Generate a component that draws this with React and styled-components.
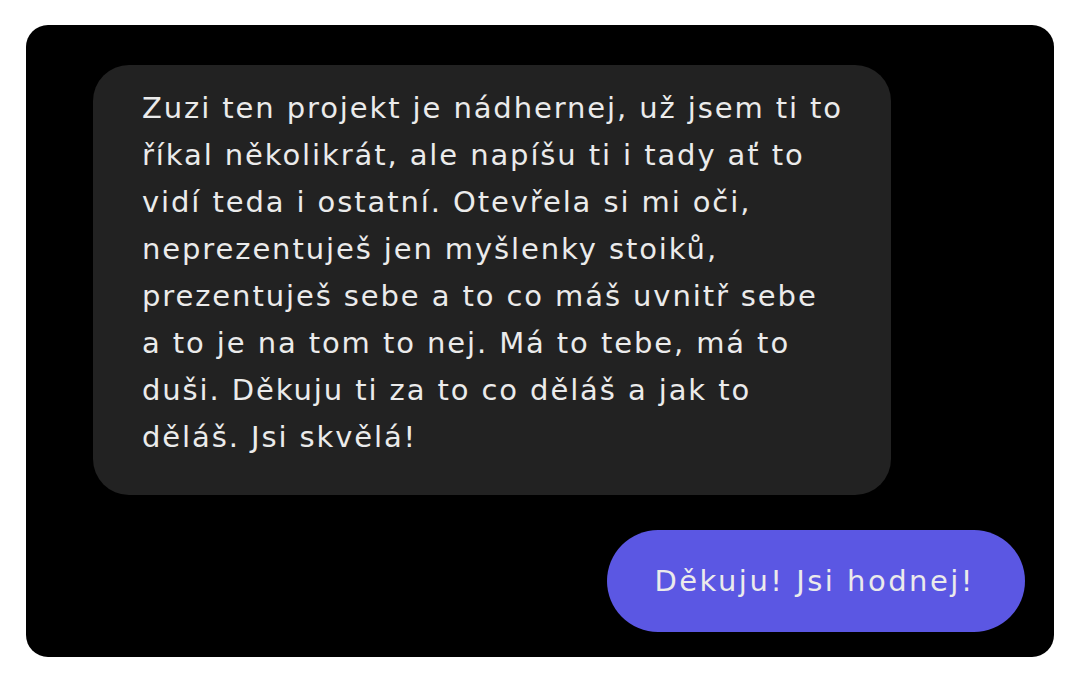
import styled, { createGlobalStyle } from 'styled-components';

const GlobalStyle = createGlobalStyle`
  html, body {
    margin: 0;
    padding: 0;
    background: #ffffff;
  }
  body {
    font-family: 'DejaVu Sans', 'Open Sans', sans-serif;
  }
`;

const Page = styled.div`
  display: flex;
  padding: 25px 26px;
`;

const Card = styled.div`
  display: flex;
  flex-direction: column;
  width: 1028px;
  height: 632px;
  box-sizing: border-box;
  padding: 40px 29px 25px 67px;
  background: #000000;
  border-radius: 22px;
`;

const Bubble = styled.div`
  box-sizing: border-box;
  color: #ebebeb;
  font-size: 29px;
  line-height: 47px;
  font-weight: 400;
  letter-spacing: 1.9px;
`;

const Incoming = styled(Bubble)`
  align-self: flex-start;
  width: 798px;
  height: 430px;
  padding: 20px 20px 0 49px;
  background: #222222;
  border-radius: 36px;
`;

const Outgoing = styled(Bubble)`
  align-self: flex-end;
  display: flex;
  align-items: center;
  height: 102px;
  margin-top: 35px;
  padding: 0 50px 0 47px;
  background: #5b57e3;
  border-radius: 51px;
  letter-spacing: 2.5px;
`;

const Line = styled.span`
  display: block;
  white-space: nowrap;
`;

const lines = [
  'Zuzi ten projekt je nádhernej, už jsem ti to',
  'říkal několikrát, ale napíšu ti i tady ať to',
  'vidí teda i ostatní. Otevřela si mi oči,',
  'neprezentuješ jen myšlenky stoiků,',
  'prezentuješ sebe a to co máš uvnitř sebe',
  'a to je na tom to nej. Má to tebe, má to',
  'duši. Děkuju ti za to co děláš a jak to',
  'děláš. Jsi skvělá!',
];

const App = () => (
  <>
    <GlobalStyle />
    <Page>
      <Card>
        <Incoming>
          {lines.map((l) => (
            <Line key={l}>{l}</Line>
          ))}
        </Incoming>
        <Outgoing>Děkuju! Jsi hodnej!</Outgoing>
      </Card>
    </Page>
  </>
);

export default App;
